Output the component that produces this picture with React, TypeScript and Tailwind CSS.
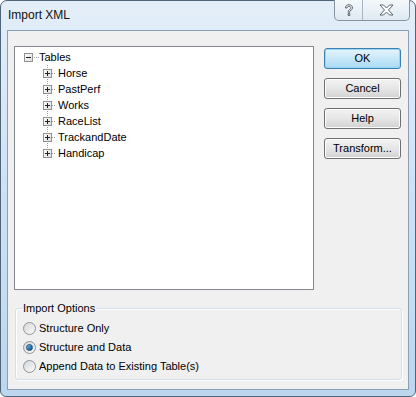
import React from 'react';

const tables = ['Horse', 'PastPerf', 'Works', 'RaceList', 'TrackandDate', 'Handicap'];

function Expander({ open }: { open?: boolean }) {
  return (
    <svg width="9" height="9" viewBox="0 0 9 9" className="shrink-0">
      <defs>
        <linearGradient id="exp" x1="0" y1="0" x2="1" y2="1">
          <stop offset="0" stopColor="#ffffff" />
          <stop offset="1" stopColor="#dcdcdc" />
        </linearGradient>
      </defs>
      <rect x="0.5" y="0.5" width="8" height="8" fill="url(#exp)" stroke="#919191" />
      <path d="M2 4.5H7" stroke="#1f1f1f" />
      {!open && <path d="M4.5 2V7" stroke="#1f1f1f" />}
    </svg>
  );
}

function Radio({ checked, label }: { checked?: boolean; label: string }) {
  return (
    <div className="flex items-center h-[19px]">
      <div className="w-[13px] h-[13px] rounded-full border border-[#8f9498] bg-gradient-to-br from-[#d4d6d8] to-[#fbfbfb] flex items-center justify-center shrink-0">
        {checked && (
          <div className="w-[7px] h-[7px] rounded-full border border-[#1d4f74] bg-gradient-to-br from-[#7cc3ef] via-[#2a83c2] to-[#16527f]" />
        )}
      </div>
      <span className="ml-[3px]">{label}</span>
    </div>
  );
}

function Button({ label, primary }: { label: string; primary?: boolean }) {
  return (
    <div
      className={
        primary
          ? 'w-[77px] h-[21px] rounded-[3px] border border-[#3c7fb1] bg-gradient-to-b from-[#e5f4fc] via-[#c8e8f9] to-[#a8d9f5] shadow-[inset_0_0_0_1px_#9ad7f7] flex items-center justify-center'
          : 'w-[77px] h-[21px] rounded-[3px] border border-[#707070] bg-gradient-to-b from-[#f3f3f3] via-[#e6e6e6] to-[#d2d2d2] shadow-[inset_0_0_0_1px_#fcfcfc] flex items-center justify-center'
      }
    >
      {label}
    </div>
  );
}

export default function App() {
  return (
    <div className="w-[416px] h-[397px] bg-white font-['Liberation_Sans',Arial,sans-serif] text-black">
      <div className="relative flex flex-col w-[416px] h-[397px] rounded-t-[7px] rounded-b-[6px] border border-[#50647a] bg-gradient-to-b from-[#e3eef8] via-[#cde1f3] to-[#bcd6ee] px-[6px] pb-[6px]">
        {/* title bar */}
        <div className="h-[29px] flex items-center pl-[1px] pb-[1px] text-[12px] text-[#111]">Import XML</div>
        <div className="absolute top-[-1px] right-[5px] flex h-[21px] rounded-b-[5px] border border-[#8593a3] border-t-0 overflow-hidden bg-gradient-to-b from-[#f4f8fb] to-[#dfe9f2]">
          <div className="w-[28px] flex items-center justify-center border-r border-[#a7b4c2]">
            <svg width="10" height="13" viewBox="0 0 10 13">
              <path
                d="M1.5 4 C1.5 1.5 3 0.8 5 0.8 C7.2 0.8 8.5 2 8.5 3.8 C8.5 5.4 7.3 6 6.2 6.7 C5.8 7 5.8 7.5 5.8 8.2 H4.2 C4.2 7.2 4.3 6.4 5.2 5.8 C6.3 5.1 6.9 4.7 6.9 3.8 C6.9 2.8 6.1 2.3 5 2.3 C3.7 2.3 3.1 3 3.1 4 Z M4.2 9.5 H5.8 V11.5 H4.2 Z"
                fill="#ffffff"
                stroke="#4a5563"
                strokeWidth="0.9"
              />
            </svg>
          </div>
          <div className="w-[46px] flex items-center justify-center">
            <svg width="15" height="12" viewBox="0 0 15 12">
              <path
                d="M1 1 H4.5 L7.5 4 L10.5 1 H14 L9.5 6 L14 11 H10.5 L7.5 8 L4.5 11 H1 L5.5 6 Z"
                fill="#ffffff"
                stroke="#4a5563"
                strokeWidth="0.9"
                strokeLinejoin="round"
              />
            </svg>
          </div>
        </div>

        {/* client area */}
        <div className="flex-1 flex flex-col border border-[#8aa0b6] bg-[#f0f0f0] text-[11px]">
          <div className="flex pt-[15px] pl-[6px]">
            {/* tree */}
            <div className="relative w-[300px] h-[244px] border border-[#828790] bg-white pt-[2px]">
              <svg className="absolute left-0 top-0" width="120" height="150">
                <g stroke="#a0a0a0" strokeDasharray="1 1">
                  <path d="M19 10.5H24" />
                  <path d="M32.5 18V106" />
                  {tables.map((t, i) => (
                    <path key={t} d={`M37 ${26.5 + i * 16}H41`} />
                  ))}
                </g>
              </svg>
              <div className="relative">
                <div className="flex items-center h-4 pl-[9px]">
                  <Expander open />
                  <span className="ml-[6px]">Tables</span>
                </div>
                {tables.map((t) => (
                  <div key={t} className="flex items-center h-4 pl-[28px]">
                    <Expander />
                    <span className="ml-[6px]">{t}</span>
                  </div>
                ))}
              </div>
            </div>
            {/* buttons */}
            <div className="flex flex-col gap-[9px] ml-[10px] mt-[2px]">
              <Button label="OK" primary />
              <Button label="Cancel" />
              <Button label="Help" />
              <Button label="Transform..." />
            </div>
          </div>

          <fieldset className="mt-[10px] ml-[7px] w-[387px] h-[80px] border border-[#d5dfe5] rounded-[3px] shadow-[inset_1px_1px_0_#ffffff,1px_1px_0_#ffffff] px-[7px]">
            <legend className="ml-[-1px] px-[1px]">Import Options</legend>
            <div className="flex flex-col mt-[2px]">
              <Radio label="Structure Only" />
              <Radio label="Structure and Data" checked />
              <Radio label="Append Data to Existing Table(s)" />
            </div>
          </fieldset>
        </div>
      </div>
    </div>
  );
}
